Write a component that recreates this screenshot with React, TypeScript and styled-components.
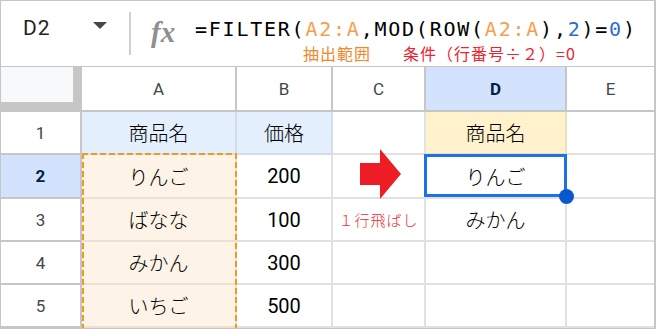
import React from 'react';
import styled, { createGlobalStyle, css } from 'styled-components';

const GlobalStyle = createGlobalStyle`
  html, body {
    margin: 0;
    padding: 0;
    background: #fff;
  }
`;

type Tone = 'plain' | 'blue' | 'peach' | 'yellow';

const toneBg: Record<Tone, string> = {
  plain: '#ffffff',
  blue: '#e3effc',
  peach: '#fdf3e7',
  yellow: '#fff2cc',
};

const toneLine: Record<Tone, string> = {
  plain: '#e1e1e1',
  blue: '#d3dde9',
  peach: '#ebe0d2',
  yellow: '#e8dec2',
};

const Frame = styled.div`
  width: 656px;
  box-sizing: border-box;
  border: 1px solid #c6c6c6;
  border-right-width: 2px;
  background: #fff;
`;

const FormulaBar = styled.div`
  height: 66px;
  box-sizing: border-box;
  border-bottom: 1px solid #c6c6c6;
  display: flex;
  align-items: flex-start;
`;

const NameBox = styled.div`
  width: 128px;
  box-sizing: border-box;
  margin-top: 15px;
  height: 24px;
  padding: 0 22px;
  display: flex;
  align-items: center;
  justify-content: space-between;
`;

const NameText = styled.span`
  font-family: Roboto, 'Liberation Sans', sans-serif;
  font-size: 21px;
  line-height: 24px;
  letter-spacing: 1px;
  color: #1f1f1f;
`;

const Caret = styled.span`
  width: 0;
  height: 0;
  border-left: 7px solid transparent;
  border-right: 7px solid transparent;
  border-top: 7px solid #444746;
  margin-bottom: 6px;
`;

const Divider = styled.div`
  width: 2px;
  height: 43px;
  margin-top: 11px;
  background: #d0d0d0;
`;

const FxMark = styled.span`
  width: 26px;
  margin: 15px 0 0 20px;
  font-family: 'Liberation Serif', 'DejaVu Serif', serif;
  font-style: italic;
  font-weight: 700;
  font-size: 29px;
  line-height: 32px;
  color: #8f8f8f;
  white-space: nowrap;
`;

const FormulaColumn = styled.div`
  margin: 16px 0 0 18px;
  display: flex;
  flex-direction: column;
`;

const FormulaLine = styled.div`
  font-family: 'DejaVu Sans Mono', 'Liberation Mono', monospace;
  font-size: 20px;
  line-height: 24px;
  letter-spacing: 1.76px;
  color: #000;
  white-space: nowrap;
`;

const Ref = styled.span<{ $kind: 'range' | 'num' }>`
  color: ${(p) => (p.$kind === 'range' ? '#f6a04d' : '#2f6bd6')};
`;

const NoteRow = styled.div`
  margin-top: 3px;
  padding-left: 108px;
  display: flex;
  gap: 32px;
`;

const Note = styled.span<{ $tone: 'orange' | 'red' }>`
  font-family: 'Noto Sans CJK JP', 'Noto Sans', sans-serif;
  font-size: 16px;
  line-height: 18px;
  letter-spacing: 1px;
  color: ${(p) => (p.$tone === 'orange' ? '#f7862a' : '#ef2230')};
  white-space: nowrap;
`;

const Sheet = styled.div`
  display: grid;
  grid-template-columns: 81px 155px 96px 93px 141px 87px;
  grid-template-rows: 45px 43px 44px 43px 43px 43px;
`;

const Corner = styled.div`
  grid-column: 1;
  grid-row: 1;
  background: #c6c6c6;
`;

const CornerPane = styled.div`
  width: 72px;
  height: 35px;
  background: #f8f9fa;
`;

type Placed = { $col: number; $row: number };

const placed = css<Placed>`
  grid-column: ${(p) => p.$col};
  grid-row: ${(p) => p.$row};
`;

const headText = css<{ $active?: boolean }>`
  display: flex;
  align-items: center;
  justify-content: center;
  box-sizing: border-box;
  font-family: Roboto, 'Liberation Sans', sans-serif;
  font-size: 17px;
  background: ${(p) => (p.$active ? '#d3e3fd' : '#fff')};
  color: ${(p) => (p.$active ? '#041e49' : '#444746')};
  font-weight: ${(p) => (p.$active ? 700 : 400)};
`;

const ColHead = styled.div<Placed & { $active?: boolean; $last?: boolean }>`
  ${placed}
  ${headText}
  border-bottom: 2px solid #c6c6c6;
  border-right: ${(p) => (p.$last ? 'none' : '2px solid #c6c6c6')};
`;

const RowHead = styled.div<Placed & { $active?: boolean }>`
  ${placed}
  ${headText}
  border-right: 2px solid #c6c6c6;
  border-bottom: 2px solid #c6c6c6;
`;

const Cell = styled.div<Placed & { $tone: Tone; $num?: boolean; $last?: boolean }>`
  ${placed}
  position: relative;
  display: flex;
  align-items: center;
  justify-content: center;
  box-sizing: border-box;
  background: ${(p) => toneBg[p.$tone]};
  border-bottom: 2px solid ${(p) => toneLine[p.$tone]};
  border-right: ${(p) => (p.$last ? 'none' : `2px solid ${toneLine[p.$tone]}`)};
  font-family: ${(p) =>
    p.$num
      ? "Roboto, 'Liberation Sans', sans-serif"
      : "'Noto Sans CJK JP', 'Noto Sans', sans-serif"};
  font-weight: ${(p) => (p.$num ? 400 : 300)};
  font-size: 20px;
  color: #000;
`;

const CopyMarquee = styled.div`
  grid-column: 2;
  grid-row: 3 / 7;
  position: relative;
  z-index: 1;
  margin-top: -2px;
  pointer-events: none;
  background-image:
    repeating-linear-gradient(90deg, #f29a1f 0 6px, transparent 6px 9px),
    repeating-linear-gradient(180deg, #f29a1f 0 6px, transparent 6px 9px),
    repeating-linear-gradient(180deg, #f29a1f 0 6px, transparent 6px 9px);
  background-size: 100% 2px, 2px 100%, 2px 100%;
  background-position: left top, left top, right top;
  background-repeat: no-repeat;
`;

const Selection = styled.div`
  grid-column: 5;
  grid-row: 3;
  position: relative;
  z-index: 1;
  box-sizing: border-box;
  margin: -1px 0 2px -2px;
  border: 3px solid #1a73e8;
  pointer-events: none;
`;

const FillHandle = styled.span`
  position: absolute;
  right: -10px;
  bottom: -10px;
  width: 15px;
  height: 15px;
  border-radius: 50%;
  background: #0b57d0;
`;

const ArrowMark = styled.svg`
  position: absolute;
  left: 27px;
  top: -6px;
  width: 41px;
  height: 50px;
`;

const SkipNote = styled.span`
  font-family: 'Noto Sans CJK JP', 'Noto Sans', sans-serif;
  font-size: 15px;
  letter-spacing: 1px;
  color: #ef2b33;
  white-space: nowrap;
`;

type CellData = { text?: string; tone?: Tone; num?: boolean; extra?: React.ReactNode };

const rows: CellData[][] = [
  [
    { text: '商品名', tone: 'blue' },
    { text: '価格', tone: 'blue' },
    {},
    { text: '商品名', tone: 'yellow' },
    {},
  ],
  [
    { text: 'りんご', tone: 'peach' },
    { text: '200', num: true },
    {
      extra: (
        <ArrowMark viewBox="0 0 41 50">
          <polygon points="0,14 20,14 20,0 41,25 20,50 20,36 0,36" fill="#ee1c25" />
        </ArrowMark>
      ),
    },
    { text: 'りんご' },
    {},
  ],
  [
    { text: 'ばなな', tone: 'peach' },
    { text: '100', num: true },
    { extra: <SkipNote>１行飛ばし</SkipNote> },
    { text: 'みかん' },
    {},
  ],
  [
    { text: 'みかん', tone: 'peach' },
    { text: '300', num: true },
    {},
    {},
    {},
  ],
  [
    { text: 'いちご', tone: 'peach' },
    { text: '500', num: true },
    {},
    {},
    {},
  ],
];

const columns = ['A', 'B', 'C', 'D', 'E'];

const App: React.FC = () => {
  return (
    <Frame>
      <GlobalStyle />
      <FormulaBar>
        <NameBox>
          <NameText>D2</NameText>
          <Caret />
        </NameBox>
        <Divider />
        <FxMark>fx</FxMark>
        <FormulaColumn>
          <FormulaLine>
            =FILTER(<Ref $kind="range">A2:A</Ref>,MOD(ROW(<Ref $kind="range">A2:A</Ref>),
            <Ref $kind="num">2</Ref>)=<Ref $kind="num">0</Ref>)
          </FormulaLine>
          <NoteRow>
            <Note $tone="orange">抽出範囲</Note>
            <Note $tone="red">条件（行番号÷２）=0</Note>
          </NoteRow>
        </FormulaColumn>
      </FormulaBar>

      <Sheet>
        <Corner>
          <CornerPane />
        </Corner>
        {columns.map((c, i) => (
          <ColHead
            key={c}
            $col={i + 2}
            $row={1}
            $active={c === 'D'}
            $last={i === columns.length - 1}
          >
            {c}
          </ColHead>
        ))}
        {rows.map((row, r) => (
          <React.Fragment key={r}>
            <RowHead $col={1} $row={r + 2} $active={r === 1}>
              {r + 1}
            </RowHead>
            {row.map((cell, c) => (
              <Cell
                key={c}
                $col={c + 2}
                $row={r + 2}
                $tone={cell.tone ?? 'plain'}
                $num={cell.num}
                $last={c === row.length - 1}
              >
                {cell.text}
                {cell.extra}
              </Cell>
            ))}
          </React.Fragment>
        ))}
        <CopyMarquee />
        <Selection>
          <FillHandle />
        </Selection>
      </Sheet>
    </Frame>
  );
};

export default App;
